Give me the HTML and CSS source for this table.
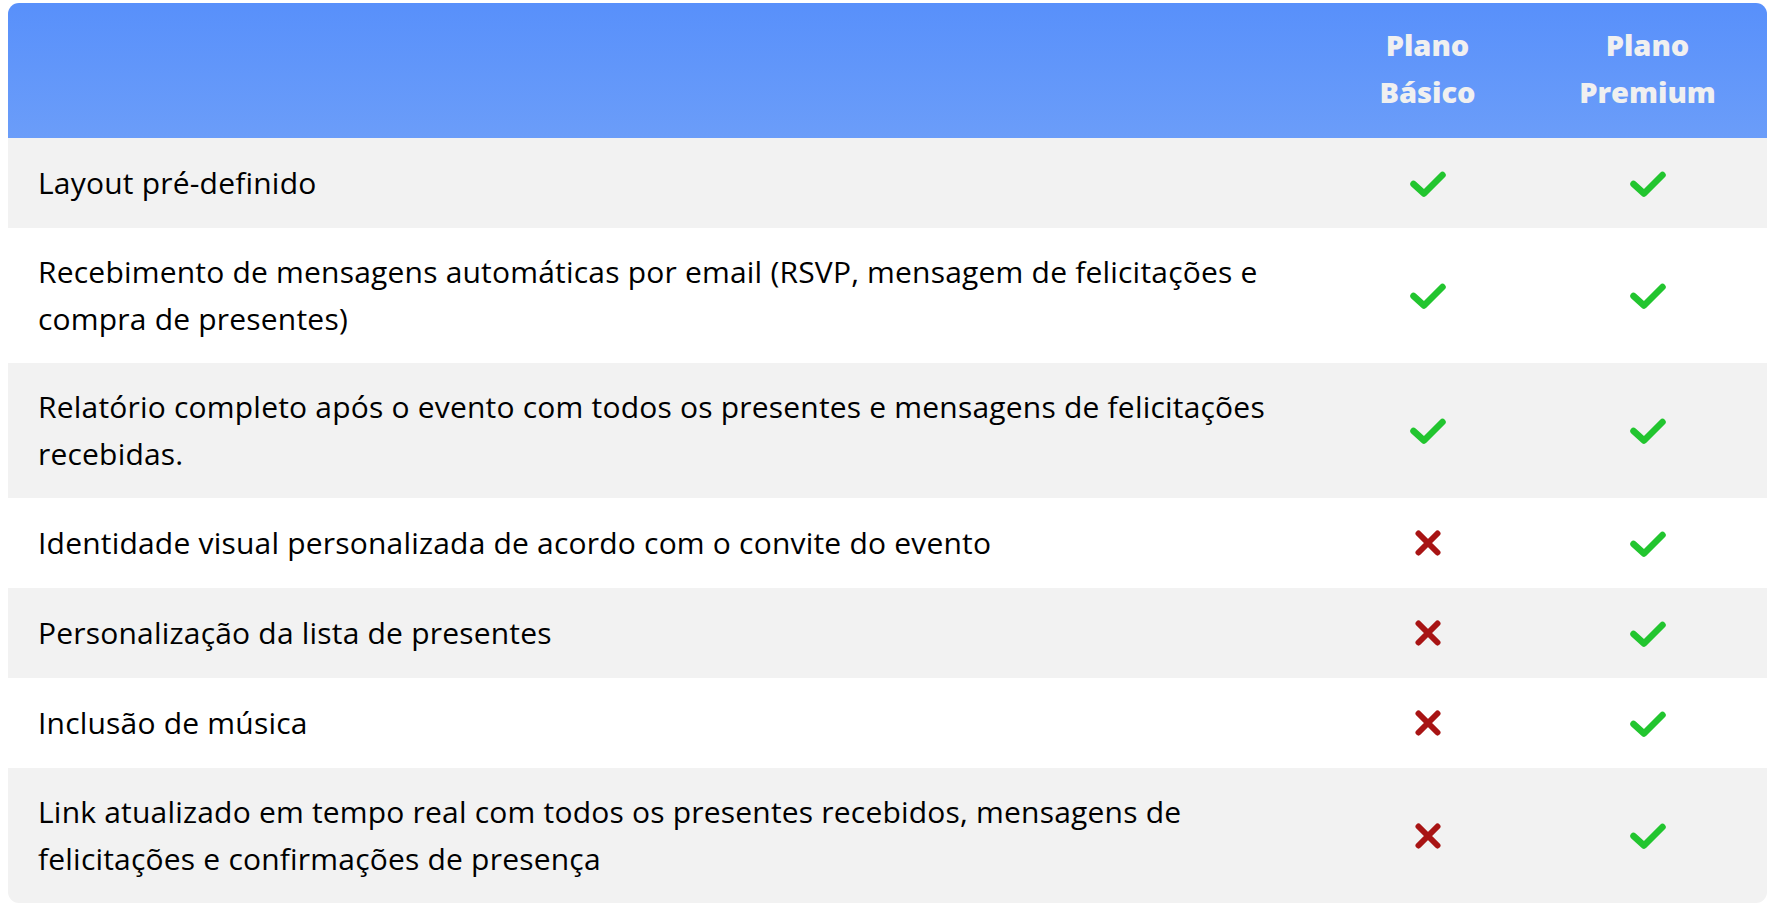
FILE: index.html
```html
<!DOCTYPE html>
<html lang="pt-BR">
<head>
<meta charset="utf-8">
<title>Comparação de planos</title>
<link rel="stylesheet" href="styles.css">
</head>
<body>
<div class="plans">
  <div class="row head">
    <div class="cell feature"></div>
    <div class="cell plan">Plano<br>Básico</div>
    <div class="cell plan">Plano<br>Premium</div>
  </div>
  <div class="row grey">
    <div class="cell feature">Layout pré-definido</div>
    <div class="cell mark"><svg class="ok" viewBox="0 0 36 27"><polyline points="3.5,14 14,23.5 32.5,5"/></svg></div>
    <div class="cell mark"><svg class="ok" viewBox="0 0 36 27"><polyline points="3.5,14 14,23.5 32.5,5"/></svg></div>
  </div>
  <div class="row">
    <div class="cell feature">Recebimento de mensagens automáticas por email (RSVP, mensagem de felicitações e compra de presentes)</div>
    <div class="cell mark"><svg class="ok" viewBox="0 0 36 27"><polyline points="3.5,14 14,23.5 32.5,5"/></svg></div>
    <div class="cell mark"><svg class="ok" viewBox="0 0 36 27"><polyline points="3.5,14 14,23.5 32.5,5"/></svg></div>
  </div>
  <div class="row grey">
    <div class="cell feature">Relatório completo após o evento com todos os presentes e mensagens de felicitações recebidas.</div>
    <div class="cell mark"><svg class="ok" viewBox="0 0 36 27"><polyline points="3.5,14 14,23.5 32.5,5"/></svg></div>
    <div class="cell mark"><svg class="ok" viewBox="0 0 36 27"><polyline points="3.5,14 14,23.5 32.5,5"/></svg></div>
  </div>
  <div class="row">
    <div class="cell feature">Identidade visual personalizada de acordo com o convite do evento</div>
    <div class="cell mark"><svg class="no" viewBox="0 0 26 26"><path d="M3.5 3.5L22.5 22.5M22.5 3.5L3.5 22.5"/></svg></div>
    <div class="cell mark"><svg class="ok" viewBox="0 0 36 27"><polyline points="3.5,14 14,23.5 32.5,5"/></svg></div>
  </div>
  <div class="row grey">
    <div class="cell feature">Personalização da lista de presentes</div>
    <div class="cell mark"><svg class="no" viewBox="0 0 26 26"><path d="M3.5 3.5L22.5 22.5M22.5 3.5L3.5 22.5"/></svg></div>
    <div class="cell mark"><svg class="ok" viewBox="0 0 36 27"><polyline points="3.5,14 14,23.5 32.5,5"/></svg></div>
  </div>
  <div class="row">
    <div class="cell feature">Inclusão de música</div>
    <div class="cell mark"><svg class="no" viewBox="0 0 26 26"><path d="M3.5 3.5L22.5 22.5M22.5 3.5L3.5 22.5"/></svg></div>
    <div class="cell mark"><svg class="ok" viewBox="0 0 36 27"><polyline points="3.5,14 14,23.5 32.5,5"/></svg></div>
  </div>
  <div class="row grey">
    <div class="cell feature">Link atualizado em tempo real com todos os presentes recebidos, mensagens de felicitações e confirmações de presença</div>
    <div class="cell mark"><svg class="no" viewBox="0 0 26 26"><path d="M3.5 3.5L22.5 22.5M22.5 3.5L3.5 22.5"/></svg></div>
    <div class="cell mark"><svg class="ok" viewBox="0 0 36 27"><polyline points="3.5,14 14,23.5 32.5,5"/></svg></div>
  </div>
</div>
</body>
</html>
```

FILE: styles.css
```css
html, body {
  margin: 0;
  padding: 0;
  background: #ffffff;
}
body {
  padding: 3px 1px 0 8px;
  font-family: "Open Sans", "Liberation Sans", sans-serif;
  color: #000000;
}
.plans {
  border-radius: 11px;
  overflow: hidden;
}
.row {
  display: grid;
  grid-template-columns: 1fr 201px 239px;
  min-height: 90px;
  background: #ffffff;
}
.row.grey {
  background: #f2f2f2;
}
.row.head {
  background: linear-gradient(180deg, #5890fb 0%, #6b9df9 100%);
}
.cell {
  box-sizing: border-box;
  font-size: 30px;
  line-height: 47px;
  letter-spacing: 0.2px;
}
.feature {
  display: flex;
  align-items: center;
  padding: 19.5px 30px 21.5px;
}
.plan {
  padding: 18px 0 23px;
  text-align: center;
  font-weight: 800;
  color: #f0f0f0;
  font-size: 29px;
  letter-spacing: 0;
}
.mark {
  display: flex;
  align-items: center;
  justify-content: center;
  padding: 0;
}
.ok {
  width: 36px;
  height: 27px;
  fill: none;
  stroke: #22c52f;
  stroke-width: 6.5;
  stroke-linecap: round;
  stroke-linejoin: round;
}
.no {
  width: 26px;
  height: 26px;
  fill: none;
  stroke: #a81414;
  stroke-width: 6;
  stroke-linecap: round;
}
```
